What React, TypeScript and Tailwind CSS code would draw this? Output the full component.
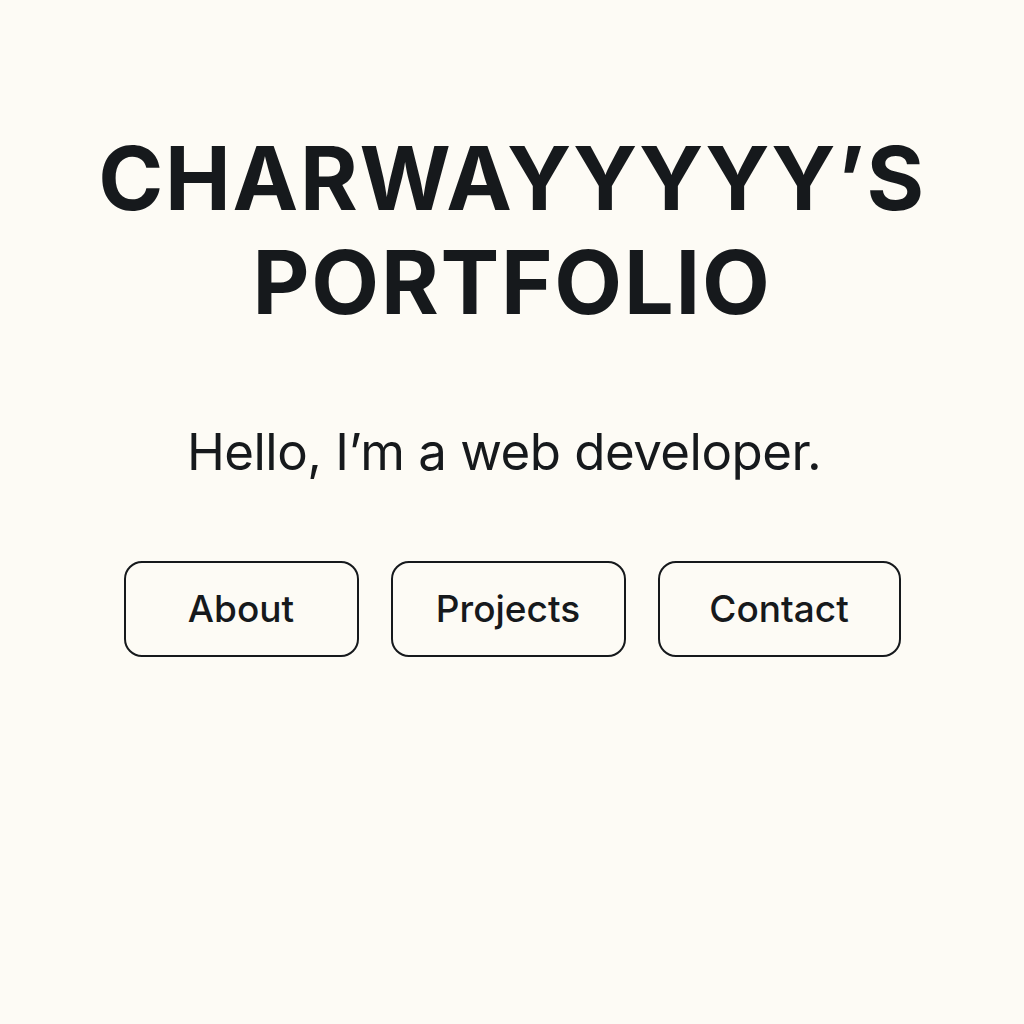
import React from "react";

export default function App() {
  return (
    <div className="min-h-[1024px] w-full bg-[#fdfbf5] text-[#16191c] flex flex-col items-center pt-[126px]" style={{ fontFamily: "Inter, 'Noto Sans', sans-serif" }}>
      <h1 className="text-[88px] leading-[104px] font-bold text-center tracking-[0.02em]">
        CHARWAYYYYY’S
        <br />
        PORTFOLIO
      </h1>
      <p className="mt-[88px] pr-[16px] text-[51px] leading-[60px] font-normal text-center tracking-[-0.01em]">Hello, I’m a web developer.</p>
      <div className="mt-[79px] flex gap-[32px]">
        <button className="w-[235px] h-[96px] rounded-[18px] border-2 border-[#16191c] text-[37px] font-medium">About</button>
        <button className="w-[235px] h-[96px] rounded-[18px] border-2 border-[#16191c] text-[37px] font-medium">Projects</button>
        <button className="w-[243px] h-[96px] rounded-[18px] border-2 border-[#16191c] text-[37px] font-medium">Contact</button>
      </div>
    </div>
  );
}
